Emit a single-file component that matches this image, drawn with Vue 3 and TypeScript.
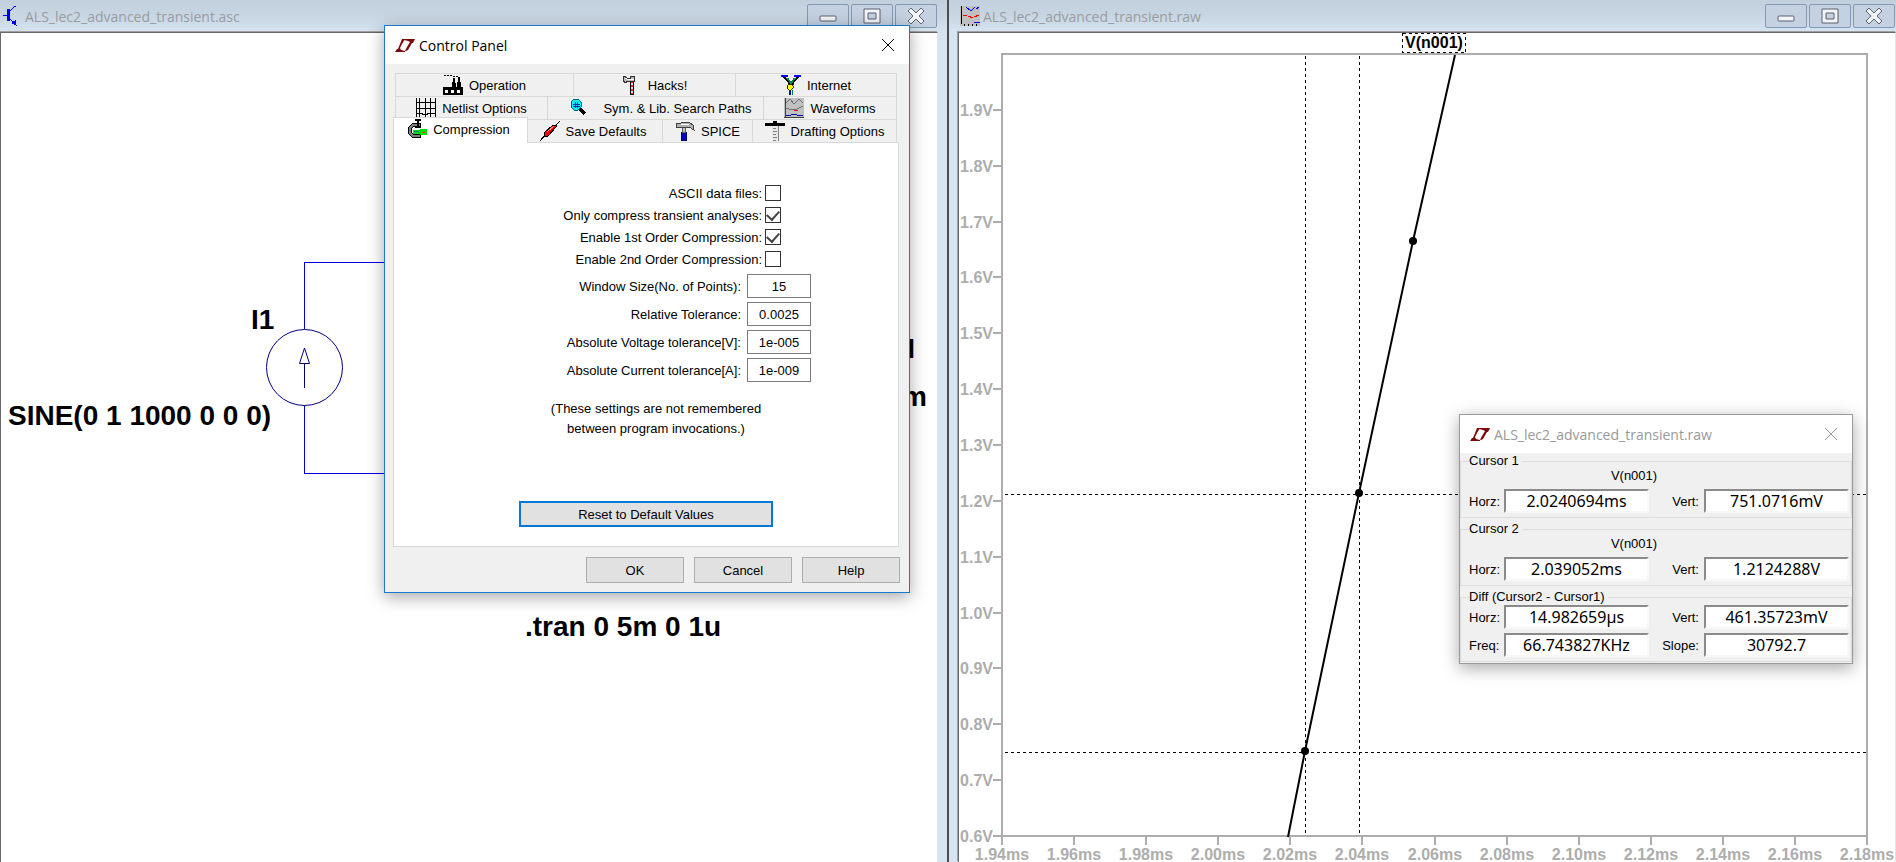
<script setup lang="ts">
import { reactive, ref } from 'vue'

interface Shape {
  d: string
  fill?: string
  stroke?: string
  w?: number
}

const icons: Record<string, Shape[]> = {
  logo: [
    { d: 'M7 0H10L7 5L5 9L6 11L10 12V13H0L2 10H3Z', fill: '#7d0a0a' },
    { d: 'M9 0H20L18 4H17L13 11L11 12H10L12 8L15 3L13 2L9 1Z', fill: '#7d0a0a' },
  ],
  factory: [
    { d: 'M0 20V12H9L10 3H12L13 12H14L15 2H17L18 12H20V20Z', fill: '#000' },
    { d: 'M2 15H5V18H2ZM8 15H11V18H8ZM14 15H17V18H14Z', fill: '#fff' },
    { d: 'M1 0H3M4 0H6M7 0H9M10 1H12M13 1H15', stroke: '#000', w: 1 },
  ],
  hatchet: [
    { d: 'M8 5H12V20H8Z', fill: '#000' },
    { d: 'M9 6H11V8H9ZM9 10H11V12H9ZM9 14H11V16H9ZM9 18H11V19H9Z', fill: '#ff2020' },
    { d: 'M9 8H11V10H9ZM9 12H11V14H9ZM9 16H11V18H9Z', fill: '#e0e0e0' },
    { d: 'M2 1L5 3H8V1H12V6H8L6 6L3 8L1 5Z', fill: '#b8b8b8', stroke: '#303030', w: 1 },
    { d: 'M3 3L5 4H12', stroke: '#fff', w: 1 },
  ],
  network: [
    { d: 'M3 2L8 7V10M17 2L12 7V10', stroke: '#000', w: 2 },
    { d: 'M6 3L10 8L14 3M10 8V10', stroke: '#008050', w: 2 },
    { d: 'M0 1H7M13 1H20', stroke: '#0000f0', w: 2 },
    { d: 'M9 15V20', stroke: '#0000d0', w: 2 },
    { d: 'M11 15V20', stroke: '#008040', w: 1 },
    { d: 'M8 9H10L12 11V13L10 15H8L6 13V11Z', fill: '#ffff00', stroke: '#303000', w: 1 },
  ],
  grid: [
    { d: 'M4 0L3 4L4 8L3 13L4 20M9 0V5L10 9L9 13V20M15 0L14 5L15 8L14 13L15 20M19 0V20M0 4L5 5L9 4L14 5L20 4M0 10L5 11L10 10L15 11L20 10M0 16L4 15L9 17L14 15L20 16M0 0V20', stroke: '#000', w: 1 },
  ],
  magnifier: [
    { d: 'M11 11L16 16', stroke: '#000', w: 3 },
    { d: 'M5 1H9L12 4V9L9 12H5L2 9V4Z', fill: '#00f0ff', stroke: '#006878', w: 1 },
    { d: 'M6 4V10M8 4V10M4 6H11M4 8H11', stroke: '#0030c0', w: 1 },
  ],
  waves: [
    { d: 'M0 0H20V20H0Z', fill: '#c0c0c0' },
    { d: 'M1 0V20M0 19H20', stroke: '#404040', w: 1 },
    { d: 'M2 5L6 1L10 6L15 1L19 5', stroke: '#707080', w: 1 },
    { d: 'M2 10L8 12L13 11L19 8', stroke: '#707070', w: 1 },
    { d: 'M10 12H14', stroke: '#f00000', w: 1 },
    { d: 'M2 17H7L10 16L13 17H19', stroke: '#0000c0', w: 1 },
  ],
  clamp: [
    { d: 'M14 6H6L3 9V14L6 17H14', stroke: '#000', w: 4 },
    { d: 'M13 6H6L3 9V14L6 17H13', stroke: '#808080', w: 2 },
    { d: 'M8 0H14V2H12V7H14V9H8V7H10V2H8Z', fill: '#000' },
    { d: 'M6 11L20 10V16L6 15Z', fill: '#00e000' },
    { d: 'M7 12H12', stroke: '#008080', w: 1 },
    { d: 'M15 13H18', stroke: '#d04000', w: 1 },
  ],
  marker: [
    { d: 'M0 20L5 14M16 4L20 0', stroke: '#000', w: 1 },
    { d: 'M4 16V12L13 4H16V6L8 15Z', fill: '#f00000', stroke: '#000', w: 1 },
    { d: 'M7 11L14 5', stroke: '#ff9090', w: 1 },
  ],
  hammer: [
    { d: 'M6 11H11V19H6Z', fill: '#0000c0', stroke: '#000060', w: 1 },
    { d: 'M7 6H10V11H7Z', fill: '#c0c0c0', stroke: '#606060', w: 1 },
    { d: 'M1 2H4L5 3L7 1H14L18 4L19 9L14 6H6L4 6H1Z', fill: '#b0b0b0', stroke: '#404040', w: 1 },
    { d: 'M6 3H14', stroke: '#fff', w: 1 },
  ],
  tsquare: [
    { d: 'M0 2H8V0H12V2H20V5H0Z', fill: '#000' },
    { d: 'M7 5H13V20H7Z', fill: '#e8e8e8' },
    { d: 'M13 5V20M8 7H11M8 10H12M8 13H11M8 16H12M8 19H11', stroke: '#808080', w: 1 },
  ],
  transistor: [
    { d: 'M1 9H5M7 6L12 1L14 0M7 12L12 17', stroke: '#0000f0', w: 1 },
    { d: 'M5 3H8V15H5Z', fill: '#0000f0' },
    { d: 'M14 14V18L15 20L9 17Z', fill: '#0000f0' },
  ],
  chart: [
    { d: 'M0 0H20V20H0Z', fill: '#c0c0c0' },
    { d: 'M1 0V18M4 18V20M8 18V20M12 18V20M16 18V20', stroke: '#000', w: 1 },
    { d: 'M6 1L11 5L15 1M16 3L19 1', stroke: '#0000f0', w: 1 },
    { d: 'M3 9H7M8 10L13 12M14 11L19 9', stroke: '#f00000', w: 1 },
    { d: 'M14 16H20', stroke: '#0000f0', w: 1 },
  ],
}

interface Tab {
  label: string
  icon: string
  wide?: boolean
}

const tabRows: Tab[][] = [
  [
    { label: 'Operation', icon: 'factory' },
    { label: 'Hacks!', icon: 'hatchet' },
    { label: 'Internet', icon: 'network' },
  ],
  [
    { label: 'Netlist Options', icon: 'grid' },
    { label: 'Sym. & Lib. Search Paths', icon: 'magnifier', wide: true },
    { label: 'Waveforms', icon: 'waves' },
  ],
  [
    { label: 'Compression', icon: 'clamp' },
    { label: 'Save Defaults', icon: 'marker' },
    { label: 'SPICE', icon: 'hammer' },
    { label: 'Drafting Options', icon: 'tsquare' },
  ],
]
const activeTab = ref('Compression')

const checks = reactive([
  { id: 'ascii', label: 'ASCII data files:', on: false },
  { id: 'transient', label: 'Only compress transient analyses:', on: true },
  { id: 'first', label: 'Enable 1st Order Compression:', on: true },
  { id: 'second', label: 'Enable 2nd Order Compression:', on: false },
])

const fields = reactive([
  { id: 'window', label: 'Window Size(No. of Points):', value: '15' },
  { id: 'reltol', label: 'Relative Tolerance:', value: '0.0025' },
  { id: 'vtol', label: 'Absolute Voltage tolerance[V]:', value: '1e-005' },
  { id: 'ctol', label: 'Absolute Current tolerance[A]:', value: '1e-009' },
])

const groups = reactive([
  {
    title: 'Cursor 1',
    trace: 'V(n001)',
    cells: [
      { id: 'c1h', label: 'Horz:', value: '2.0240694ms' },
      { id: 'c1v', label: 'Vert:', value: '751.0716mV' },
    ],
  },
  {
    title: 'Cursor 2',
    trace: 'V(n001)',
    cells: [
      { id: 'c2h', label: 'Horz:', value: '2.039052ms' },
      { id: 'c2v', label: 'Vert:', value: '1.2124288V' },
    ],
  },
  {
    title: 'Diff (Cursor2 - Cursor1)',
    trace: '',
    cells: [
      { id: 'dh', label: 'Horz:', value: '14.982659µs' },
      { id: 'dv', label: 'Vert:', value: '461.35723mV' },
      { id: 'df', label: 'Freq:', value: '66.743827KHz' },
      { id: 'ds', label: 'Slope:', value: '30792.7' },
    ],
  },
])

const plot = { left: 43, right: 908, top: 21, bottom: 803 }
const xTicks = Array.from({ length: 13 }, (_, i) => ({
  x: Math.round(plot.left + ((plot.right - plot.left) * i) / 12),
  label: (1.94 + i * 0.02).toFixed(2) + 'ms',
}))
const yTicks = Array.from({ length: 14 }, (_, i) => ({
  y: Math.round(plot.bottom - ((plot.bottom - plot.top) * i) / 14),
  label: (0.6 + i * 0.1).toFixed(1) + 'V',
}))
const samples = [
  { x: 454, y: 208 },
  { x: 400, y: 460 },
  { x: 346, y: 718 },
]
</script>

<template>
  <main class="desktop">
    <section class="mdi schematic">
      <header class="bar">
        <svg class="ico" viewBox="0 0 20 20" shape-rendering="crispEdges">
          <path v-for="(s, i) in icons.transistor" :key="i" :d="s.d" :fill="s.fill ?? 'none'" :stroke="s.stroke ?? 'none'" :stroke-width="s.w" />
        </svg>
        <h1>ALS_lec2_advanced_transient.asc</h1>
        <div class="controls">
          <button aria-label="Minimize"><svg viewBox="0 0 20 18"><rect x="2" y="9" width="16" height="5" rx="1" /></svg></button>
          <button aria-label="Maximize"><svg viewBox="0 0 20 18"><path fill-rule="evenodd" d="M2 2H18V16H2ZM6 6V12H14V6Z" /></svg></button>
          <button aria-label="Close"><svg viewBox="0 0 20 18"><path d="M2 4L5 1L10 6L15 1L18 4L13 9L18 14L15 17L10 12L5 17L2 14L7 9Z" /></svg></button>
        </div>
      </header>
      <div class="client">
        <svg class="canvas" viewBox="0 0 936 829">
          <path d="M600 229.5H303.5V296M303.5 372V440.5H600" fill="none" stroke="#0000e0" shape-rendering="crispEdges" />
          <g fill="none" stroke="#000080">
            <circle cx="303.5" cy="334.5" r="38" />
            <path d="M303.5 315L298.5 330.5H308.5ZM303.5 331V355" />
          </g>
          <g class="spice">
            <text x="250" y="296">I1</text>
            <text x="7" y="392">SINE(0 1 1000 0 0 0)</text>
            <text x="524" y="603">.tran 0 5m 0 1u</text>
            <text x="914" y="325" text-anchor="end">I</text>
            <text x="926" y="373" text-anchor="end">m</text>
          </g>
        </svg>
      </div>
    </section>

    <section class="mdi waveform">
      <header class="bar">
        <svg class="ico" viewBox="0 0 20 20" shape-rendering="crispEdges">
          <path v-for="(s, i) in icons.chart" :key="i" :d="s.d" :fill="s.fill ?? 'none'" :stroke="s.stroke ?? 'none'" :stroke-width="s.w" />
        </svg>
        <h1>ALS_lec2_advanced_transient.raw</h1>
        <div class="controls">
          <button aria-label="Minimize"><svg viewBox="0 0 20 18"><rect x="2" y="9" width="16" height="5" rx="1" /></svg></button>
          <button aria-label="Maximize"><svg viewBox="0 0 20 18"><path fill-rule="evenodd" d="M2 2H18V16H2ZM6 6V12H14V6Z" /></svg></button>
          <button aria-label="Close"><svg viewBox="0 0 20 18"><path d="M2 4L5 1L10 6L15 1L18 4L13 9L18 14L15 17L10 12L5 17L2 14L7 9Z" /></svg></button>
        </div>
      </header>
      <div class="client">
        <svg class="canvas" viewBox="0 0 936 829">
          <g class="axis" shape-rendering="crispEdges">
            <rect :x="plot.left" :y="plot.top" :width="plot.right - plot.left" :height="plot.bottom - plot.top" />
            <line v-for="t in xTicks" :key="t.label" :x1="t.x" :x2="t.x" :y1="plot.bottom" :y2="plot.bottom + 9" />
            <line v-for="t in yTicks" :key="t.label" :x1="plot.left - 9" :x2="plot.left" :y1="t.y" :y2="t.y" />
          </g>
          <g class="scale">
            <text v-for="t in xTicks" :key="t.label" :x="t.x" y="827" text-anchor="middle">{{ t.label }}</text>
            <text v-for="t in yTicks" :key="t.label" x="34" :y="t.y + 6" text-anchor="end">{{ t.label }}</text>
          </g>
          <g class="cursors" shape-rendering="crispEdges">
            <path d="M346.5 23V802M400.5 23V802M46 719.5H907M46 461.5H907" />
            <rect x="443.5" y="0.5" width="63" height="19" />
          </g>
          <path d="M329 804L346 718L400 460L454 208L496 22" fill="none" stroke="#000" stroke-width="2" />
          <circle v-for="p in samples" :key="p.x" :cx="p.x" :cy="p.y" r="4" />
          <text class="trace" x="475" y="15" text-anchor="middle">V(n001)</text>
        </svg>
      </div>
    </section>

    <section class="dialog panel-dialog" role="dialog" aria-labelledby="cp-title">
      <header class="caption">
        <svg class="logo" viewBox="0 0 20 13">
          <path v-for="(s, i) in icons.logo" :key="i" :d="s.d" :fill="s.fill" />
        </svg>
        <h2 id="cp-title">Control Panel</h2>
        <button class="close" aria-label="Close"><svg viewBox="0 0 12 12"><path d="M0 0L12 12M12 0L0 12" /></svg></button>
      </header>
      <div class="body">
        <div class="tabs" role="tablist">
          <div v-for="(row, r) in tabRows" :key="r" class="row" :class="'row' + (r + 1)">
            <button
              v-for="t in row"
              :key="t.label"
              role="tab"
              :aria-selected="activeTab === t.label"
              :class="{ active: activeTab === t.label, wide: t.wide }"
              @click="activeTab = t.label"
            >
              <svg class="ico" viewBox="0 0 20 20" shape-rendering="crispEdges">
                <path v-for="(s, i) in icons[t.icon]" :key="i" :d="s.d" :fill="s.fill ?? 'none'" :stroke="s.stroke ?? 'none'" :stroke-width="s.w" />
              </svg>
              <span>{{ t.label }}</span>
            </button>
          </div>
        </div>
        <form class="sheet" role="tabpanel" @submit.prevent>
          <div class="checks">
            <div v-for="c in checks" :key="c.id" class="line">
              <label :for="c.id">{{ c.label }}</label>
              <input :id="c.id" v-model="c.on" type="checkbox" />
            </div>
          </div>
          <div class="numbers">
            <div v-for="f in fields" :key="f.id" class="line">
              <label :for="f.id">{{ f.label }}</label>
              <input :id="f.id" v-model="f.value" type="text" />
            </div>
          </div>
          <p>(These settings are not remembered<br />between program invocations.)</p>
          <button class="btn reset">Reset to Default Values</button>
        </form>
        <footer>
          <button class="btn">OK</button>
          <button class="btn">Cancel</button>
          <button class="btn">Help</button>
        </footer>
      </div>
    </section>

    <section class="dialog cursor-dialog" role="dialog" aria-labelledby="cur-title">
      <header class="caption">
        <svg class="logo" viewBox="0 0 20 13">
          <path v-for="(s, i) in icons.logo" :key="i" :d="s.d" :fill="s.fill" />
        </svg>
        <h2 id="cur-title">ALS_lec2_advanced_transient.raw</h2>
        <button class="close" aria-label="Close"><svg viewBox="0 0 12 12"><path d="M0 0L12 12M12 0L0 12" /></svg></button>
      </header>
      <div class="readouts">
        <fieldset v-for="g in groups" :key="g.title">
          <legend>{{ g.title }}</legend>
          <div v-if="g.trace" class="probe">{{ g.trace }}</div>
          <div class="cells">
            <template v-for="c in g.cells" :key="c.id">
              <label :for="c.id">{{ c.label }}</label>
              <input :id="c.id" v-model="c.value" type="text" />
            </template>
          </div>
        </fieldset>
      </div>
    </section>
  </main>
</template>

<style>
body {
  margin: 0;
  background: #fff;
}
</style>

<style scoped>
* {
  box-sizing: border-box;
}
.desktop {
  position: relative;
  display: flex;
  height: 100vh;
  overflow: hidden;
  font-family: "Liberation Sans", Arial, sans-serif;
  font-size: 13px;
  color: #000;
}
button,
input {
  font: inherit;
  color: inherit;
  margin: 0;
  padding: 0;
  border-radius: 0;
}
svg {
  display: block;
  flex: none;
}
h1,
h2 {
  margin: 0;
  font-family: "Open Sans", "Noto Sans", sans-serif;
  font-size: 14px;
  font-weight: 400;
  white-space: nowrap;
}
.ico {
  width: 20px;
  height: 20px;
}
.mdi {
  flex: 1 1 0;
  min-width: 0;
  display: flex;
  flex-direction: column;
  background: #d6e4f1;
}
.schematic {
  border-right: 1px solid #4f4c4c;
  padding-right: 9px;
}
.waveform {
  border-left: 1px solid #4f4c4c;
  padding-left: 9px;
}
.bar {
  display: flex;
  align-items: center;
  flex: none;
  height: 32px;
  padding-left: 2px;
  background: linear-gradient(#c2cfdd, #c8d5e2 50%, #d6e4f1);
}
.schematic .bar {
  margin-right: -9px;
  padding-right: 9px;
}
.waveform .bar {
  margin-left: -9px;
  padding-left: 11px;
}
.bar h1 {
  flex: 1;
  padding-left: 3px;
  color: #999da2;
}
.controls {
  display: flex;
  gap: 2px;
  padding-right: 1px;
}
.controls button {
  display: flex;
  align-items: center;
  justify-content: center;
  width: 42px;
  height: 24px;
  border: 1px solid #8497b4;
  border-radius: 2px;
  background: #c3d1e1;
}
.controls svg {
  width: 20px;
  height: 18px;
  fill: #f4f5f7;
  stroke: #5b6072;
}
.client {
  flex: 1;
  overflow: hidden;
  background: #fff;
  border: 1px solid #696969;
  border-right-color: #e3e3e3;
  border-bottom: 0;
  box-shadow: -1px -1px 0 #a0a0a0;
}
.canvas {
  width: 100%;
}
.spice {
  font-size: 28px;
  font-weight: 700;
}
.axis {
  fill: none;
  stroke: #adadad;
  stroke-width: 2;
}
.scale {
  font-size: 16px;
  font-weight: 700;
  fill: #adadad;
}
.cursors {
  fill: none;
  stroke: #000;
  stroke-dasharray: 3 3;
}
.trace {
  font-size: 16px;
  font-weight: 700;
}
.dialog {
  position: absolute;
  background: #f0f0f0;
  box-shadow: 0 4px 16px rgba(0, 0, 0, 0.35);
}
.panel-dialog {
  left: 384px;
  top: 25px;
  width: 526px;
  border: 1px solid #1979ca;
}
.cursor-dialog {
  left: 1459px;
  top: 414px;
  width: 394px;
  border: 1px solid #999;
}
.caption {
  display: flex;
  align-items: center;
  height: 38px;
  padding: 0 15px 0 10px;
  background: #fff;
}
.caption h2 {
  flex: 1;
  padding-left: 4px;
}
.cursor-dialog .caption {
  color: #999;
}
.logo {
  width: 20px;
  height: 13px;
}
.close {
  border: 0;
  background: none;
}
.close svg {
  width: 12px;
  height: 12px;
  overflow: visible;
  fill: none;
  stroke: currentColor;
}
.body {
  padding: 9px 9px 9px 8px;
}
.tabs {
  padding: 0 3px 0 2px;
}
.row {
  display: grid;
}
.row1 {
  grid-template-columns: 178fr 162fr 162fr;
}
.row2 {
  grid-template-columns: 152fr 216fr 134fr;
}
.row3 {
  grid-template-columns: 133fr 134fr 90fr 145fr;
}
.row button {
  display: flex;
  align-items: center;
  justify-content: center;
  gap: 6px;
  height: 23px;
  border: 1px solid #d9d9d9;
  border-width: 1px 0 0 1px;
  background: #f0f0f0;
  white-space: nowrap;
}
.row button:last-child {
  border-right-width: 1px;
}
.row button.wide {
  gap: 14px;
  padding-left: 10px;
}
.row button.active {
  position: relative;
  height: 26px;
  margin: -2px 0 -1px -2px;
  padding: 0 4px 3px 0;
  border-right-width: 1px;
  background: #fff;
}
.row3 button:nth-child(2) {
  border-left-width: 0;
  padding-right: 4px;
}
.sheet {
  margin-right: 1px;
  padding: 42px 0 19px;
  background: #fff;
  border: 1px solid #d9d9d9;
}
.line {
  display: flex;
  align-items: center;
  justify-content: flex-end;
}
.checks {
  display: flex;
  flex-direction: column;
  gap: 6px;
  padding-right: 117px;
}
.checks .line {
  gap: 3px;
}
.checks input {
  appearance: none;
  display: flex;
  justify-content: center;
  width: 16px;
  height: 16px;
  border: 1px solid #333;
  background: #fff;
}
.checks input:checked::after {
  content: "";
  width: 6px;
  height: 10px;
  border: solid #444;
  border-width: 0 2px 2px 0;
  transform: rotate(42deg);
}
.numbers {
  display: flex;
  flex-direction: column;
  gap: 4px;
  margin-top: 7px;
  padding-right: 87px;
}
.numbers .line {
  gap: 6px;
}
.numbers input {
  width: 64px;
  height: 24px;
  border: 1px solid #7a7a7a;
  background: #fff;
  text-align: center;
}
.sheet p {
  margin: 17px 0 0 20px;
  line-height: 20px;
  text-align: center;
}
.btn {
  width: 98px;
  height: 26px;
  border: 1px solid #adadad;
  background: #e1e1e1;
}
.reset {
  display: block;
  width: 254px;
  margin: 62px auto 0;
  border: 2px solid #0078d7;
}
footer {
  display: flex;
  justify-content: flex-end;
  gap: 10px;
  padding-top: 10px;
}
.readouts {
  display: flex;
  flex-direction: column;
  gap: 3px;
  padding-bottom: 1px;
}
fieldset {
  min-width: 0;
  margin: 0;
  padding: 0 2px 4px 8px;
  border: 1px solid #dcdcdc;
}
legend {
  padding: 0 3px 0 0;
  line-height: 16px;
}
.probe {
  padding: 0 50px 6px 0;
  line-height: 14px;
  text-align: center;
}
.cells {
  display: grid;
  grid-template-columns: 35px 1fr 55px 1fr;
  align-items: center;
  row-gap: 4px;
}
.cells label:nth-of-type(even) {
  padding-right: 5px;
  text-align: right;
}
.cells input {
  min-width: 0;
  width: 100%;
  height: 24px;
  border: 2px solid;
  border-color: #8a8a8a #f8f8f8 #f8f8f8 #8a8a8a;
  background: #fff;
  font-family: "Noto Sans", sans-serif;
  font-size: 16px;
  text-align: center;
}
</style>
